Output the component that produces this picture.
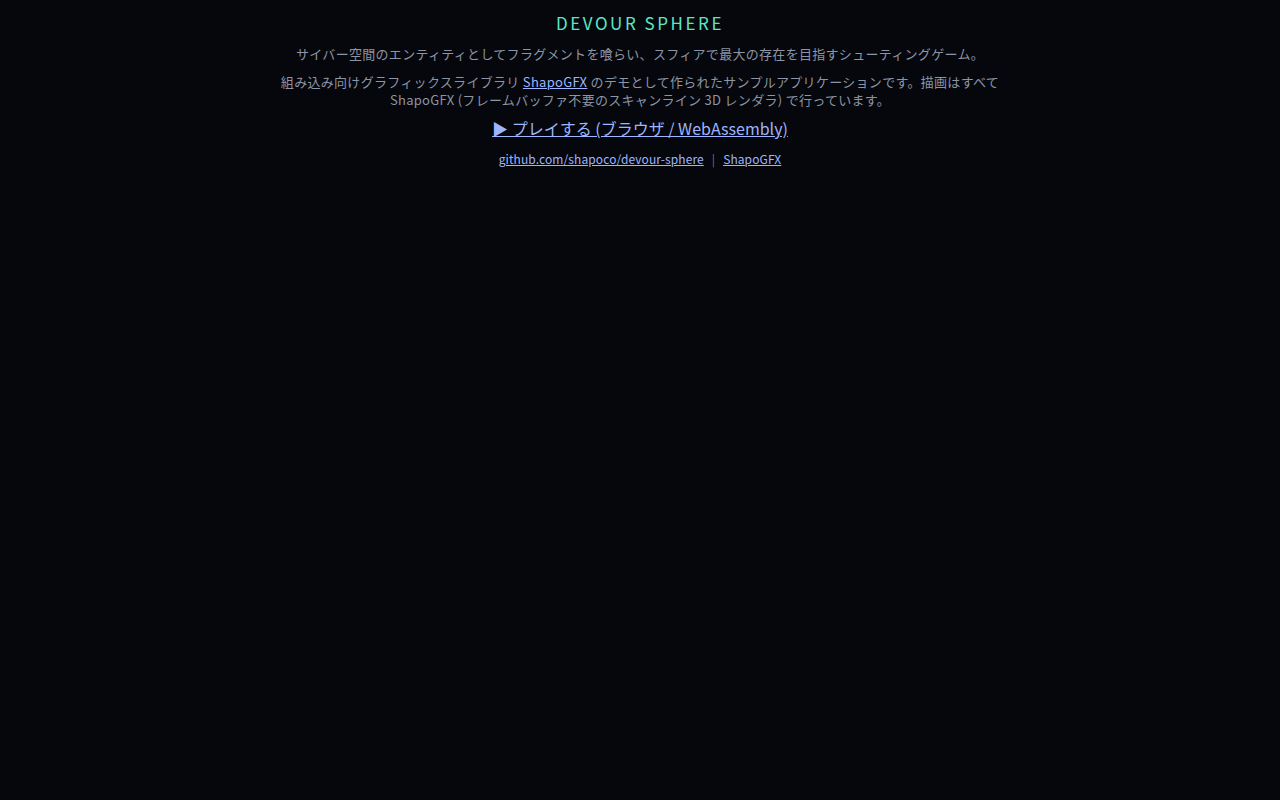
import React from 'react';

export default function App() {
  return (
    <div
      className="min-h-screen bg-[#05070c] text-[#8c95a6] text-center"
      style={{ fontFamily: '"Noto Sans CJK JP", sans-serif' }}
    >
      <div className="mx-auto max-w-[724px] pt-[12px]">
        <h1 className="text-[17px] leading-[22px] tracking-[0.15em] text-[#5ee6c4]">DEVOUR SPHERE</h1>
        <p className="mt-[11px] text-[13px] leading-[18px] tracking-[0.3px]">
          サイバー空間のエンティティとしてフラグメントを喰らい、スフィアで最大の存在を目指すシューティングゲーム。
        </p>
        <p className="mt-[10px] text-[13px] leading-[18px] tracking-[0.3px]">
          組み込み向けグラフィックスライブラリ{' '}
          <a href="#" className="text-[#9db5ff] underline">ShapoGFX</a>{' '}
          のデモとして作られたサンプルアプリケーションです。描画はすべて ShapoGFX (フレームバッファ不要のスキャンライン 3D レンダラ) で行っています。
        </p>
        <p className="mt-[8px] text-[16px] leading-[22px]">
          <a href="#" className="text-[#9db5ff] underline">▶ プレイする (ブラウザ / WebAssembly)</a>
        </p>
        <p className="mt-[12px] text-[12px] leading-[16px] tracking-[0.1px]">
          <a href="#" className="text-[#9db5ff] underline">github.com/shapoco/devour-sphere</a>
          <span className="mx-[8px] text-[#6b7384]">|</span>
          <a href="#" className="text-[#9db5ff] underline">ShapoGFX</a>
        </p>
      </div>
    </div>
  );
}
